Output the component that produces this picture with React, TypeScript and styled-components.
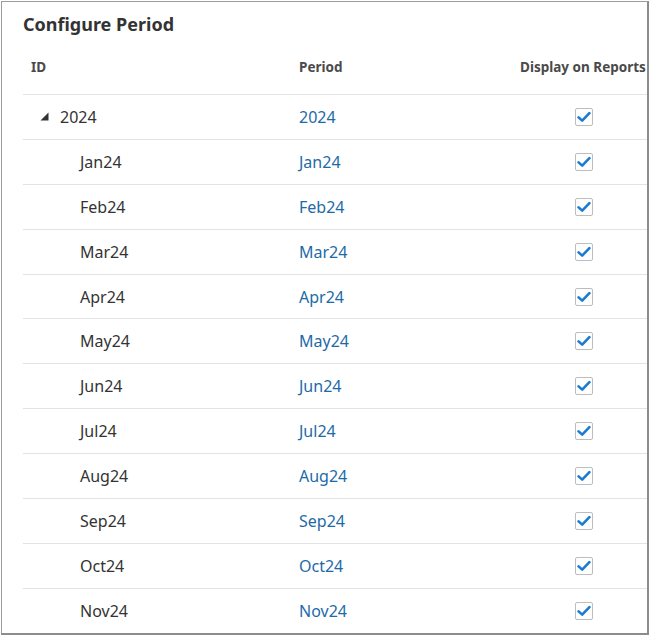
import React from "react"
import styled, { createGlobalStyle } from "styled-components"

interface IPeriodRow {
    id: string;
    period: string;
    level: number;
    display: boolean;
}

// only the months that show inside the clipped list
const months = ["Jan", "Feb", "Mar", "Apr", "May", "Jun", "Jul", "Aug", "Sep", "Oct", "Nov"]

const rows: IPeriodRow[] = [
    { id: "2024", period: "2024", level: 0, display: true },
    ...months.map(m => ({ id: `${m}24`, period: `${m}24`, level: 1, display: true })),
]

const GlobalStyle = createGlobalStyle`
    html, body {
        margin: 0;
        padding: 0;
        background: #ffffff;
    }
    body {
        font-family: "Noto Sans", "Open Sans", "Liberation Sans", sans-serif;
        color: #333333;
    }
`

const CheckIcon = () => (
    <svg width="14" height="12" viewBox="0 0 14 12">
        <path d="M1.6 6.4 L5.2 9.6 L12.4 2.2" fill="none" stroke="#1a7bd0" strokeWidth="2.6" strokeLinecap="round" strokeLinejoin="round" />
    </svg>
)

const ExpandIcon = () => (
    <svg width="9" height="9" viewBox="0 0 9 9">
        <polygon points="8.5,0.5 8.5,8.5 0.5,8.5" fill="#333333" />
    </svg>
)

export default function App() {
    return (
        <>
            <GlobalStyle />
            <Frame>
                <Title>Configure Period</Title>
                <HeaderRow>
                    <HeadCell>ID</HeadCell>
                    <HeadCell>Period</HeadCell>
                    <HeadCell>Display on Reports</HeadCell>
                </HeaderRow>
                <Body>
                    {rows.map(row => (
                        <Row key={row.id}>
                            <IdCell $level={row.level}>
                                {row.level === 0 && <Toggle><ExpandIcon /></Toggle>}
                                {row.id}
                            </IdCell>
                            <PeriodCell>{row.period}</PeriodCell>
                            <CheckCell>
                                <Checkbox aria-checked={row.display} role="checkbox">
                                    {row.display && <CheckIcon />}
                                </Checkbox>
                            </CheckCell>
                        </Row>
                    ))}
                </Body>
            </Frame>
        </>
    )
}

const Frame = styled.div`
    margin: 1px 0 0 1px;
    width: 648px;
    height: 634px;
    box-sizing: border-box;
    border-top: 1px solid #9c9c9c;
    border-left: 1px solid #9c9c9c;
    border-right: 2px solid #8c8c8c;
    border-bottom: 2px solid #8c8c8c;
    padding: 0 0 0 21px;
    overflow: hidden;
    display: flex;
    flex-direction: column;
`

const Title = styled.h1`
    margin: 0;
    height: 37px;
    box-sizing: border-box;
    padding-top: 10px;
    font-size: 18px;
    line-height: 24px;
    font-weight: 700;
    color: #333333;
    white-space: nowrap;
`

const columns = "268px 221px 144px"

const HeaderRow = styled.div`
    display: grid;
    grid-template-columns: ${columns};
    height: 56px;
    box-sizing: border-box;
    border-bottom: 1px solid #e3e3e3;
    align-items: center;
`

const HeadCell = styled.div`
    padding: 0 8px;
    font-size: 13.5px;
    font-weight: 700;
    color: #4a4a4a;
    white-space: nowrap;
`

const Body = styled.div`
    height: 526px;
    overflow: hidden;
`

const Row = styled.div`
    display: grid;
    grid-template-columns: ${columns};
    height: 44.9px;
    box-sizing: border-box;
    border-bottom: 1px solid #e3e3e3;
    align-items: center;
    font-size: 16px;
    line-height: 18px;
`

const IdCell = styled.div<{ $level: number }>`
    display: flex;
    align-items: center;
    padding-left: ${p => (p.$level === 0 ? 17 : 57)}px;
    color: #333333;
    white-space: nowrap;
`

const Toggle = styled.span`
    display: inline-flex;
    width: 20px;
    align-items: center;
`

const PeriodCell = styled.div`
    padding: 0 8px;
    color: #1d6aa7;
    white-space: nowrap;
`

const CheckCell = styled.div`
    display: flex;
    justify-content: center;
`

const Checkbox = styled.span`
    width: 18px;
    height: 18px;
    box-sizing: border-box;
    border: 1px solid #bdbdbd;
    border-radius: 2px;
    background: #ffffff;
    display: flex;
    align-items: center;
    justify-content: center;
`
